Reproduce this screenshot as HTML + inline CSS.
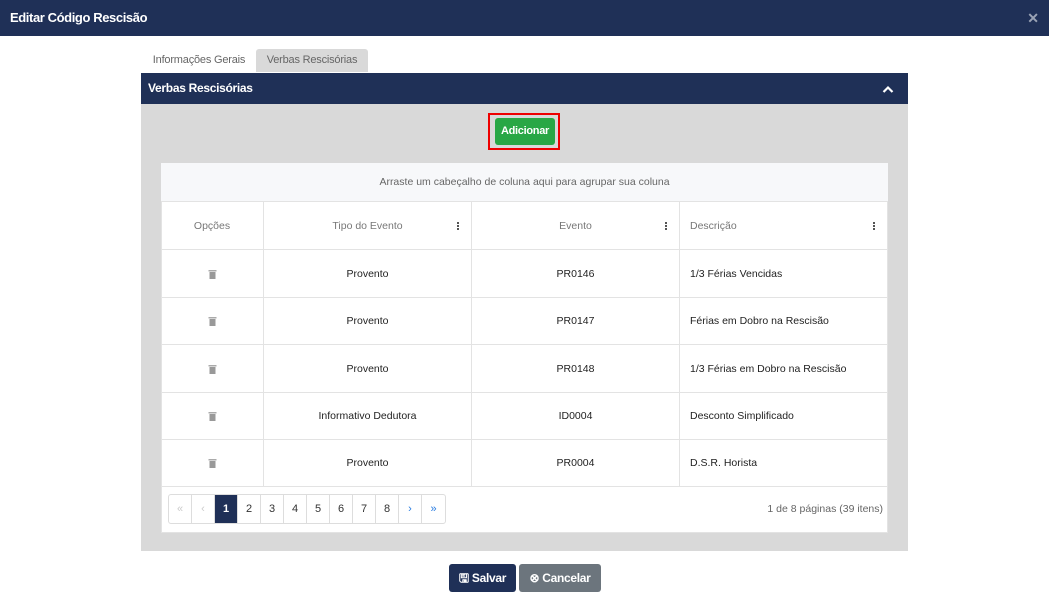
<!DOCTYPE html><html><head><meta charset="utf-8"><style>
*{box-sizing:border-box;margin:0;padding:0}
body{width:1049px;height:601px;background:#fff;font-family:"Liberation Sans",sans-serif;position:relative;overflow:hidden;color:#222}
.abs{position:absolute}
.top{left:0;top:0;width:1049px;height:36px;background:#1f3057;color:#fff;font-weight:bold;font-size:13px;letter-spacing:-0.4px;line-height:36px;padding-left:10px}
.x{right:10px;top:0;color:#9aa3b5;font-size:14px;font-weight:bold;line-height:36px}
.tab{top:49px;height:23px;font-size:11px;letter-spacing:-0.2px;line-height:23px;color:#666;text-align:center}
.ph{left:141px;top:73px;width:767px;height:31px;background:#1f3057;color:#fff;font-weight:bold;font-size:12px;letter-spacing:-0.3px;line-height:31px;padding-left:7px}
.pb{left:141px;top:104px;width:767px;height:447px;background:#d9d9d9}
.grid{left:161px;top:163px;width:727px;height:370px;background:#fff;border:1px solid #e3e3e3}
.grp{left:161px;top:163px;width:727px;height:39px;background:#f7f8fa;font-size:10.5px;color:#666;text-align:center;line-height:39px;border-bottom:1px solid #e3e3e3}
.c{position:absolute;font-size:10.5px;text-align:center;display:flex;align-items:center;justify-content:center;border-right:1px solid #e3e3e3;border-bottom:1px solid #e3e3e3}
.h{color:#777}
.dots{position:absolute;right:11px;top:50%;transform:translateY(-50%);width:3px}
.dots i{display:block;width:2px;height:2px;background:#555;margin:1px 0}
.pg{top:494px;height:30px;border:1px solid #ddd;border-radius:3px;display:flex;left:168px;overflow:hidden}
.pg span{width:23px;border-right:1px solid #ddd;font-size:11px;text-align:center;line-height:28px;color:#333}
.btn{top:564px;height:28px;border-radius:3px;color:#fff;font-weight:bold;font-size:12px;letter-spacing:-0.3px;line-height:28px;text-align:center}
</style></head><body>
<div class="abs top">Editar Código Rescisão</div><div class="abs x">✕</div>
<div class="abs tab" style="left:144px;width:110px">Informações Gerais</div>
<div class="abs tab" style="left:256px;width:112px;background:#d9d9d9;border-radius:3px 3px 0 0">Verbas Rescisórias</div>
<div class="abs ph">Verbas Rescisórias</div>
<svg class="abs" style="left:882px;top:85px" width="12" height="9" viewBox="0 0 12 9"><path d="M1.5 7 L6 2.5 L10.5 7" stroke="#fff" stroke-width="2.2" fill="none"/></svg>
<div class="abs pb"></div>
<div class="abs" style="left:488px;top:113px;width:72px;height:37px;border:2px solid #e00"></div>
<div class="abs" style="left:495px;top:118px;width:60px;height:27px;background:#28a745;border-radius:3px;color:#fff;font-weight:bold;font-size:11px;letter-spacing:-0.3px;line-height:27px;text-align:center">Adicionar</div>
<div class="abs grid"></div>
<div class="abs grp">Arraste um cabeçalho de coluna aqui para agrupar sua coluna</div>
<div id="t"></div>
<div class="abs pg"><span style="color:#ccc">«</span><span style="color:#ccc">‹</span><span style="background:#1f3057;color:#fff;font-weight:bold">1</span><span>2</span><span>3</span><span>4</span><span>5</span><span>6</span><span>7</span><span>8</span><span style="color:#2a7de1">›</span><span style="color:#2a7de1;border-right:0">»</span></div>
<div class="abs" style="right:166px;top:503px;font-size:10.5px;color:#666">1 de 8 páginas (39 itens)</div>
<div class="abs btn" style="left:449px;width:67px;background:#1f3057">🖫 Salvar</div>
<div class="abs btn" style="left:519px;width:82px;background:#6c757d">⊗ Cancelar</div>
<script>
var cols=[161,264,472,680,888],tops=[202,250,298,345,393,440,487];
var hd=["Opções","Tipo do Evento","Evento","Descrição"];
var rows=[["Provento","PR0146","1/3 Férias Vencidas"],["Provento","PR0147","Férias em Dobro na Rescisão"],["Provento","PR0148","1/3 Férias em Dobro na Rescisão"],["Informativo Dedutora","ID0004","Desconto Simplificado"],["Provento","PR0004","D.S.R. Horista"]];
var h="";
for(var r=0;r<6;r++){for(var c=0;c<4;c++){
var st="left:"+cols[c]+"px;top:"+tops[r]+"px;width:"+(cols[c+1]-cols[c])+"px;height:"+(tops[r+1]-tops[r])+"px;";
if(c==3)st+="justify-content:flex-start;padding-left:10px;";
var txt;
if(r==0){txt=hd[c]+(c>0?'<div class="dots"><i></i><i></i><i></i></div>':'');h+='<div class="c h" style="'+st+'">'+txt+'</div>';}
else{txt=c==0?'<svg width="9" height="10" viewBox="0 0 9 10"><rect x="0.5" y="1" width="8" height="1.5" fill="#aaa"/><rect x="1.5" y="3" width="6" height="7" fill="#999"/></svg>':rows[r-1][c-1];h+='<div class="c" style="'+st+'">'+txt+'</div>';}
}}
document.getElementById("t").innerHTML=h;
</script>
</body></html>
